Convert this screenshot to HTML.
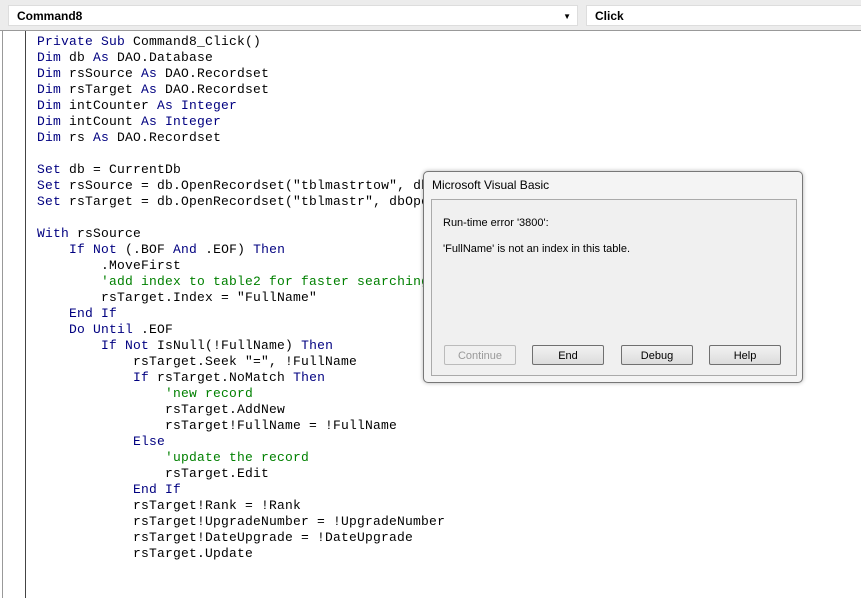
<!DOCTYPE html><html><head><style>
body{margin:0;width:861px;height:598px;overflow:hidden;background:#fff;position:relative;font-family:"Liberation Sans",sans-serif}
.top{position:absolute;left:0;top:0;width:861px;height:30px;background:#ececec;border-bottom:1px solid #999}
.dd{position:absolute;top:5px;height:21px;background:#fff;border:1px solid #ddd;font-size:12px;font-weight:bold;line-height:21px;padding-left:8px;box-sizing:border-box}
.ed{position:absolute;left:2px;top:31px;width:859px;height:567px;border-left:2px solid #999}
.gut{position:absolute;left:3px;top:31px;width:22px;height:567px;background:#fff;border-right:1px solid #444}
pre{position:absolute;left:37px;top:34px;margin:0;font-family:"Liberation Mono",monospace;font-size:13px;letter-spacing:0.2px;line-height:16px;color:#000}
.k{color:#000080}.c{color:#008000}
.dlg{position:absolute;left:423px;top:171px;width:380px;height:212px;background:#f4f4f4;border:1px solid #777;border-radius:5px;box-sizing:border-box;box-shadow:0 0 4px rgba(0,0,0,.3)}
.tt{position:absolute;left:8px;top:6px;font-size:12px;color:#000}
.in{position:absolute;left:7px;top:27px;width:366px;height:177px;background:#f0f0f0;border:1px solid #aaa;box-sizing:border-box;font-size:11px}
.b{position:absolute;top:145px;width:72px;height:20px;border:1px solid #707070;border-radius:2px;background:linear-gradient(#f2f2f2,#dcdcdc);font-size:11px;text-align:center;line-height:20px;box-sizing:border-box}
</style></head><body>
<div class="top">
<div class="dd" style="left:8px;width:570px">Command8<span style="position:absolute;right:6px;font-size:8px">▼</span></div>
<div class="dd" style="left:586px;width:280px">Click</div>
</div>
<div class="ed"></div><div class="gut"></div>
<pre><span class="k">Private Sub</span> Command8_Click()
<span class="k">Dim</span> db <span class="k">As</span> DAO.Database
<span class="k">Dim</span> rsSource <span class="k">As</span> DAO.Recordset
<span class="k">Dim</span> rsTarget <span class="k">As</span> DAO.Recordset
<span class="k">Dim</span> intCounter <span class="k">As Integer</span>
<span class="k">Dim</span> intCount <span class="k">As Integer</span>
<span class="k">Dim</span> rs <span class="k">As</span> DAO.Recordset

<span class="k">Set</span> db = CurrentDb
<span class="k">Set</span> rsSource = db.OpenRecordset("tblmastrtow", dbOpenTable)
<span class="k">Set</span> rsTarget = db.OpenRecordset("tblmastr", dbOpenTable)

<span class="k">With</span> rsSource
    <span class="k">If Not</span> (.BOF <span class="k">And</span> .EOF) <span class="k">Then</span>
        .MoveFirst
        <span class="c">'add index to table2 for faster searching</span>
        rsTarget.Index = "FullName"
    <span class="k">End If</span>
    <span class="k">Do Until</span> .EOF
        <span class="k">If Not</span> IsNull(!FullName) <span class="k">Then</span>
            rsTarget.Seek "=", !FullName
            <span class="k">If</span> rsTarget.NoMatch <span class="k">Then</span>
                <span class="c">'new record</span>
                rsTarget.AddNew
                rsTarget!FullName = !FullName
            <span class="k">Else</span>
                <span class="c">'update the record</span>
                rsTarget.Edit
            <span class="k">End If</span>
            rsTarget!Rank = !Rank
            rsTarget!UpgradeNumber = !UpgradeNumber
            rsTarget!DateUpgrade = !DateUpgrade
            rsTarget.Update</pre>
<div class="dlg">
<div class="tt">Microsoft Visual Basic</div>
<div class="in">
<div style="position:absolute;left:11px;top:17px">Run-time error '3800':</div>
<div style="position:absolute;left:11px;top:43px">'FullName' is not an index in this table.</div>
<div class="b" style="left:12px;color:#999;border-color:#bbb;background:#f0f0f0">Continue</div>
<div class="b" style="left:100px">End</div>
<div class="b" style="left:189px">Debug</div>
<div class="b" style="left:277px">Help</div>
</div></div>
</body></html>
